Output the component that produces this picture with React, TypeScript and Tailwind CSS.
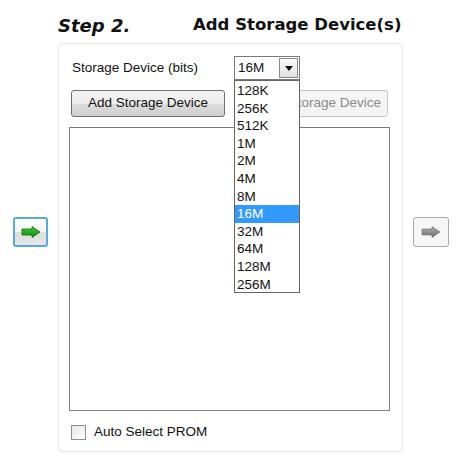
import React from 'react'

const sizes = ['128K', '256K', '512K', '1M', '2M', '4M', '8M', '16M', '32M', '64M', '128M', '256M']

const GreenArrow = () => (
    <svg width="20" height="12" viewBox="0 0 20 12">
        <defs>
            <linearGradient id="ga" x1="0" y1="0" x2="0" y2="1">
                <stop offset="0" stopColor="#3fd13f" />
                <stop offset="1" stopColor="#0f8a0f" />
            </linearGradient>
        </defs>
        <polygon points="1,3 11,3 11,0.5 19,6 11,11.5 11,9 1,9" fill="url(#ga)" stroke="#0b6b0b" strokeWidth="0.8" />
    </svg>
)

const GrayArrow = () => (
    <svg width="20" height="12" viewBox="0 0 20 12">
        <defs>
            <linearGradient id="gg" x1="0" y1="0" x2="0" y2="1">
                <stop offset="0" stopColor="#b0b0b0" />
                <stop offset="1" stopColor="#6e6e6e" />
            </linearGradient>
        </defs>
        <polygon points="1,3 11,3 11,0.5 19,6 11,11.5 11,9 1,9" fill="url(#gg)" stroke="#6a6a6a" strokeWidth="0.6" />
    </svg>
)

const App: React.FC = () => {
    return (
        <div className="w-[459px] h-[475px] bg-white text-[#111] font-['Liberation_Sans',sans-serif] text-[13.5px]">
            {/* title */}
            <div className="flex items-end pl-[58px] h-[35px] font-['DejaVu_Sans',sans-serif] font-bold">
                <span className="italic text-[18px] w-[135px] leading-none">Step 2.</span>
                <span className="text-[16.5px] leading-none pb-[2px]">Add Storage Device(s)</span>
            </div>

            <div className="flex mt-[8px]">
                <div className="w-[58px] flex justify-center pl-[3px]">
                    <button className="mt-[174px] w-[35px] h-[30px] rounded-[3px] border-2 border-[#58a9de] bg-[linear-gradient(#ffffff_0%,#f4f4f4_50%,#dedede_51%,#e6e6e6_100%)] flex items-center justify-center">
                        <GreenArrow />
                    </button>
                </div>

                {/* panel */}
                <div className="w-[345px] h-[409px] rounded-[4px] border border-[#e6e6e6] pl-[10px] pt-[12px]">
                    <div className="flex items-center h-[24px] pl-[3px]">
                        <span className="w-[162px]">Storage Device (bits)</span>
                        <div className="relative w-[66px] h-[24px] border border-[#7a7a7a] bg-white flex items-center">
                            <span className="pl-[3px] flex-1">16M</span>
                            <div className="w-[19px] h-[20px] mr-[1px] border border-[#8a8a8a] bg-[linear-gradient(#fbfbfb,#e2e2e2)] flex items-center justify-center">
                                <svg width="8" height="5" viewBox="0 0 8 5">
                                    <polygon points="0,0 8,0 4,5" fill="#111" />
                                </svg>
                            </div>
                            <div className="absolute left-[-1px] top-[23px] w-[66px] h-[213px] border border-[#646464] bg-white pt-[1px] z-10">
                                {sizes.map((s) => (
                                    <div
                                        key={s}
                                        className={
                                            s === '16M'
                                                ? 'h-[17.6px] leading-[17.6px] pl-[2px] bg-[#3399ff] text-white'
                                                : 'h-[17.6px] leading-[17.6px] pl-[2px]'
                                        }
                                    >
                                        {s}
                                    </div>
                                ))}
                            </div>
                        </div>
                    </div>

                    <div className="flex gap-[9px] mt-[10px] pl-[2px]">
                        <button className="w-[154px] h-[27px] rounded-[3px] border border-[#707070] bg-[linear-gradient(#f4f4f4_0%,#ebebeb_50%,#dddddd_51%,#cfcfcf_100%)]">
                            Add Storage Device
                        </button>
                        <button className="w-[154px] h-[27px] pl-[5px] rounded-[3px] border border-[#c4c4c4] bg-[#f4f4f4] text-[#8a8a8a]">
                            Delete Storage Device
                        </button>
                    </div>

                    <div className="mt-[10px] w-[321px] h-[284px] border border-[#828282] border-t-[#7a7a7a] bg-white" />

                    <label className="flex items-center mt-[11px] pl-[2px] gap-[8px]">
                        <span className="w-[15px] h-[15px] border border-[#8e8e8e] bg-[linear-gradient(135deg,#e6e6e6,#ffffff)]" />
                        <span>Auto Select PROM</span>
                    </label>
                </div>

                <div className="flex-1 flex justify-center pr-[1px]">
                    <button className="mt-[174px] w-[36px] h-[30px] rounded-[3px] border border-[#ababab] bg-[#f6f6f6] flex items-center justify-center">
                        <GrayArrow />
                    </button>
                </div>
            </div>
        </div>
    )
}

export default App
